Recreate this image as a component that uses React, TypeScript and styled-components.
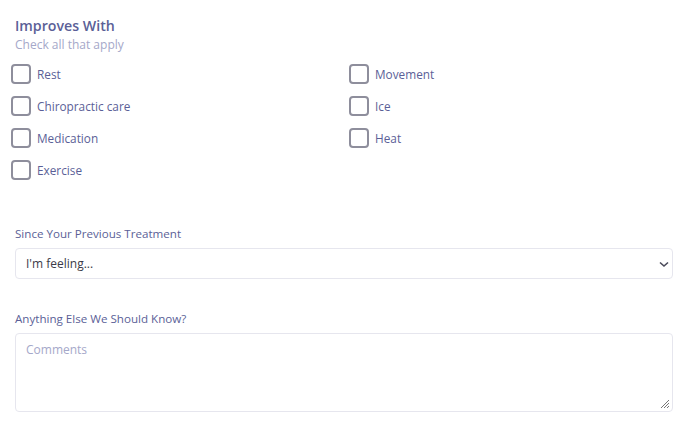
import React from 'react';
import styled, { createGlobalStyle } from 'styled-components';

const GlobalStyle = createGlobalStyle`
  body {
    margin: 0;
    background: #ffffff;
    font-family: 'Open Sans', 'Liberation Sans', sans-serif;
  }
`;

const palette = {
  text: '#5b5f97',
  muted: '#a5a8c9',
  box: '#8e8e9c',
  border: '#e6e6ee',
  dark: '#3a3a48',
};

const Form = styled.div`
  width: 688px;
  padding: 16px 15px 0 15px;
  box-sizing: border-box;
`;

const Title = styled.div`
  font-size: 14.2px;
  font-weight: 600;
  color: ${palette.text};
  line-height: 20px;
`;

const Subtitle = styled.div`
  font-size: 12px;
  color: ${palette.muted};
  line-height: 16px;
  margin-top: 1px;
`;

const CheckGrid = styled.div`
  display: grid;
  grid-template-columns: 338px 1fr;
  row-gap: 12px;
  margin: 11px 0 0 -4px;
`;

const CheckItem = styled.label`
  display: flex;
  align-items: center;
  gap: 6px;
  height: 20px;
  font-size: 11.8px;
  color: ${palette.text};
`;

const Box = styled.span`
  width: 20px;
  height: 20px;
  box-sizing: border-box;
  border: 2px solid ${palette.box};
  border-radius: 4px;
  flex-shrink: 0;
`;

const Field = styled.div<{ $top: number }>`
  margin-top: ${(p) => p.$top}px;
`;

const Label = styled.div`
  font-size: 11.6px;
  color: ${palette.text};
  line-height: 16px;
  margin-bottom: 6px;
`;

const Select = styled.div`
  height: 31px;
  box-sizing: border-box;
  border: 1px solid ${palette.border};
  border-radius: 4px;
  display: flex;
  align-items: center;
  justify-content: space-between;
  padding: 0 1px 0 10px;
  font-size: 12px;
  color: ${palette.dark};
`;

const TextArea = styled.div`
  position: relative;
  height: 79px;
  box-sizing: border-box;
  border: 1px solid ${palette.border};
  border-radius: 4px;
  padding: 7px 10px;
  font-size: 12px;
  color: ${palette.muted};
`;

const Grip = styled.svg`
  position: absolute;
  right: 2px;
  bottom: 2px;
`;

const left = ['Rest', 'Chiropractic care', 'Medication', 'Exercise'];
const right = ['Movement', 'Ice', 'Heat'];

const App = () => {
  const items: string[] = [];
  for (let i = 0; i < left.length; i++) {
    items.push(left[i]);
    items.push(right[i] ?? '');
  }
  return (
    <>
      <GlobalStyle />
      <Form>
        <Title>Improves With</Title>
        <Subtitle>Check all that apply</Subtitle>
        <CheckGrid>
          {items.map((name, i) =>
            name ? (
              <CheckItem key={i}>
                <Box />
                {name}
              </CheckItem>
            ) : (
              <span key={i} />
            )
          )}
        </CheckGrid>
        <Field $top={46}>
          <Label>Since Your Previous Treatment</Label>
          <Select>
            I'm feeling...
            <svg width="14" height="10" viewBox="0 0 14 10">
              <path d="M3 3.5 L7 7 L11 3.5" fill="none" stroke="#4a4a5a" strokeWidth="1.6" />
            </svg>
          </Select>
        </Field>
        <Field $top={32}>
          <Label>Anything Else We Should Know?</Label>
          <TextArea>
            Comments
            <Grip width="10" height="10" viewBox="0 0 10 10">
              <path d="M9 1 L1 9 M9 4 L4 9 M9 7 L7 9" stroke="#777" strokeWidth="1" />
            </Grip>
          </TextArea>
        </Field>
      </Form>
    </>
  );
};

export default App;
